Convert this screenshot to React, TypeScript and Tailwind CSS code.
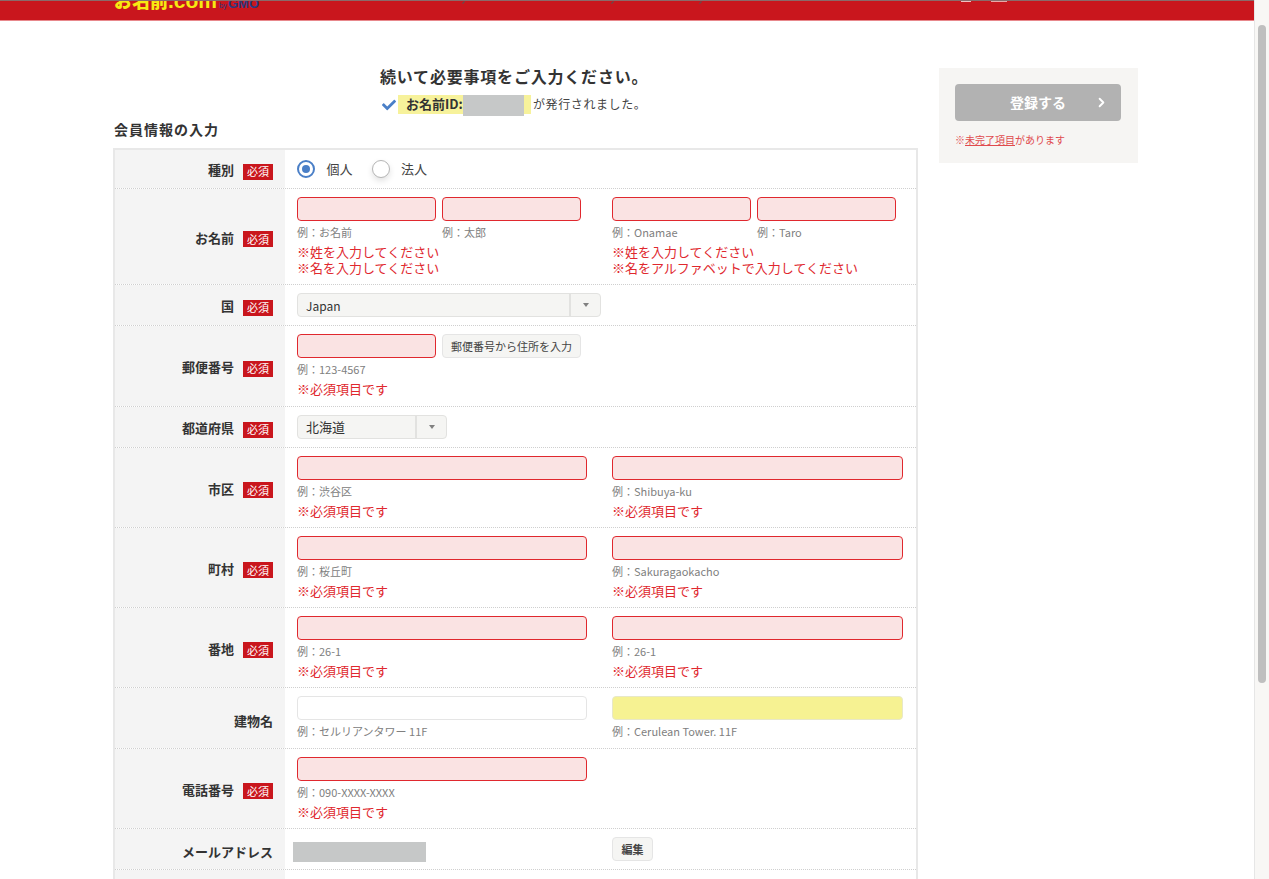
import React from 'react';
import { ChevronRight } from 'lucide-react';
import { FaCheck } from 'react-icons/fa';

const Badge = () => (
  <span className="mt-[3px] flex h-[16px] w-[30px] items-center justify-center bg-[#c9161d] text-[11px] font-normal leading-none text-white">必須</span>
);

const Hint = ({ children }: { children: React.ReactNode }) => (
  <p className="mt-[3px] h-[16px] text-[11px] leading-[16px] text-[#808080]">{children}</p>
);

const Err = ({ lines }: { lines: string[] }) => (
  <div className="mt-[4px] text-[13px] leading-[15.5px] text-[#e0282e]">
    {lines.map((l) => (
      <p key={l}>{l}</p>
    ))}
  </div>
);

const Input = ({ className }: { className: string }) => (
  <input type="text" className={`block h-[24px] rounded-[4px] border outline-none ${className}`} />
);

const errorInput = 'border-[#e0282e] bg-[#fae3e3]';

const Row = ({
  label,
  required = true,
  height,
  center = false,
  labelPad = 'pt-[2px]',
  children,
}: {
  label: string;
  required?: boolean;
  height: string;
  center?: boolean;
  labelPad?: string;
  children: React.ReactNode;
}) => (
  <div className={`grid grid-cols-[170px_1fr] border-b border-dotted border-[#cfcfcf] ${height}`}>
    <div className={`flex items-center justify-end gap-[9px] bg-[#f4f4f4] pr-[12px] text-[13px] font-bold text-[#333] ${labelPad}`}>
      <span>{label}</span>
      {required && <Badge />}
    </div>
    <div className={`px-[12px] ${center ? 'flex items-center' : 'pt-[8px]'}`}>{children}</div>
  </div>
);

const WideField = ({ hint, width = 'w-[290px]' }: { hint: string; width?: string }) => (
  <div className={width}>
    <Input className={`w-full ${errorInput}`} />
    <Hint>{hint}</Hint>
    <Err lines={['※必須項目です']} />
  </div>
);

const Select = ({ value, width, textClass }: { value: string; width: string; textClass: string }) => (
  <div className={`flex h-[24px] items-stretch rounded-[4px] border border-[#e2e2e0] bg-[#f5f5f3] text-[#333] ${width}`}>
    <div className={`flex flex-1 items-center border-r-2 border-[#e2e2e0] pl-[8px] ${textClass}`}>{value}</div>
    <div className="flex w-[29px] items-center justify-center">
      <span className="h-0 w-0 border-x-[3px] border-t-[4px] border-x-transparent border-t-[#808080]" />
    </div>
  </div>
);

const Radio = ({ checked, label }: { checked?: boolean; label: string }) => (
  <label className="flex items-center gap-[11.5px] text-[13px] text-[#444]">
    {checked ? (
      <span className="flex h-[18px] w-[18px] items-center justify-center rounded-full border-2 border-[#4a7fc7] bg-white">
        <span className="h-[8px] w-[8px] rounded-full bg-[#4a7fc7]" />
      </span>
    ) : (
      <span className="h-[18px] w-[18px] rounded-full border border-[#b5b5b5] bg-white shadow-[0_3px_6px_rgba(0,0,0,0.12)]" />
    )}
    {label}
  </label>
);

export default function App() {
  return (
    <div className="flex h-[879px] overflow-hidden bg-white font-['Noto_Sans_CJK_JP','Noto_Sans',sans-serif] text-[#333]">
      <div className="min-w-0 flex-1">
        {/* header, scrolled almost out of view */}
        <header className="h-[21px] overflow-hidden border-b border-t border-b-[#e8888c] border-t-[#8a6a6a] bg-[#c9161d]">
          <div className="ml-[114px] flex h-[19px] items-start">
            <div className="-mt-[14px] flex w-[145px] shrink-0 items-baseline whitespace-nowrap font-black leading-[26px] text-[#f6ea12]">
              <span className="text-[18px]">お名前</span>
              <span className="font-['Liberation_Sans',sans-serif] text-[21px] font-bold">.com</span>
              <span className="ml-[2px] text-[7px] font-normal text-[#2a3a80]">by</span>
              <span className="ml-[1px] font-['Liberation_Sans',sans-serif] text-[13px] font-bold text-[#2a3a80]">GMO</span>
            </div>
            {/* bottoms of the nav items that are scrolled away */}
            <span className="ml-[204px] h-[3px] w-[1px] rotate-45 bg-[#555]" />
            <span className="ml-[148px] h-[3px] w-[1px] rotate-45 bg-[#555]" />
            <span className="ml-[87px] h-[3px] w-[1px] rotate-45 bg-[#555]" />
            <span className="ml-[260px] h-[1px] w-[10px] bg-[#f0c0c0]" />
            <span className="ml-[20px] h-[1px] w-[16px] bg-[#e8a8a8]" />
          </div>
        </header>

        <div className="ml-[113px] flex w-[1025px] gap-[21px]">
          <main className="w-[805px]">
            <h1 className="ml-[267px] mt-[43px] text-[16px] font-bold leading-[24px] tracking-[0.05em] text-[#333]">
              続いて必要事項をご入力ください。
            </h1>
            <div className="ml-[269px] mt-[7px] flex h-[19px] items-start text-[12px] leading-[18px]">
              <FaCheck className="mt-[3px] h-[14px] w-[14px] text-[#4a7fc7]" />
              <div className="ml-[2px] flex h-[19px] w-[133px] bg-[#f7f29b] pl-[8px] text-[13px] font-bold">
                <span className="w-[57px] whitespace-nowrap">お名前ID:</span>
                <span className="h-[21px] w-[61px] bg-[#c6c8c8]" />
              </div>
              <span className="ml-[2px] tracking-[0.05em] text-[#444]">が発行されました。</span>
            </div>
            <h2 className="ml-[1px] mt-[5px] text-[14px] font-bold leading-[20px] tracking-[0.07em] text-[#333]">会員情報の入力</h2>

            <div className="mt-[9px] border-x-2 border-t-2 border-[#e8e8e8]">
              <Row label="種別" height="h-[39px]" center>
                <div className="flex gap-[19px]">
                  <Radio checked label="個人" />
                  <Radio label="法人" />
                </div>
              </Row>
              <Row label="お名前" height="h-[96px]">
                <div className="flex gap-[25px]">
                  <div className="w-[290px]">
                    <div className="flex gap-[6px]">
                      <div className="w-[139px]">
                        <Input className={`w-[139px] ${errorInput}`} />
                        <Hint>例：お名前</Hint>
                      </div>
                      <div className="w-[139px]">
                        <Input className={`w-[139px] ${errorInput}`} />
                        <Hint>例：太郎</Hint>
                      </div>
                    </div>
                    <Err lines={['※姓を入力してください', '※名を入力してください']} />
                  </div>
                  <div className="w-[291px]">
                    <div className="flex gap-[6px]">
                      <div className="w-[139px]">
                        <Input className={`w-[139px] ${errorInput}`} />
                        <Hint>例：Onamae</Hint>
                      </div>
                      <div className="w-[139px]">
                        <Input className={`w-[139px] ${errorInput}`} />
                        <Hint>例：Taro</Hint>
                      </div>
                    </div>
                    <Err lines={['※姓を入力してください', '※名をアルファベットで入力してください']} />
                  </div>
                </div>
              </Row>
              <Row label="国" height="h-[41px]" center>
                <Select value="Japan" width="w-[304px]" textClass="pt-[1px] text-[12px]" />
              </Row>
              <Row label="郵便番号" height="h-[81px]">
                <div className="flex gap-[6px]">
                  <Input className={`w-[139px] ${errorInput}`} />
                  <button className="h-[24px] w-[139px] rounded-[4px] border border-[#e5e5e5] bg-[#f5f5f3] text-[11px] text-[#444]">
                    郵便番号から住所を入力
                  </button>
                </div>
                <Hint>例：123-4567</Hint>
                <Err lines={['※必須項目です']} />
              </Row>
              <Row label="都道府県" height="h-[41px]" center>
                <Select value="北海道" width="w-[150px]" textClass="text-[13px]" />
              </Row>
              <Row label="市区" height="h-[80px]">
                <div className="flex gap-[25px]">
                  <WideField hint="例：渋谷区" />
                  <WideField hint="例：Shibuya-ku" width="w-[291px]" />
                </div>
              </Row>
              <Row label="町村" height="h-[80px]">
                <div className="flex gap-[25px]">
                  <WideField hint="例：桜丘町" />
                  <WideField hint="例：Sakuragaokacho" width="w-[291px]" />
                </div>
              </Row>
              <Row label="番地" height="h-[80px]">
                <div className="flex gap-[25px]">
                  <WideField hint="例：26-1" />
                  <WideField hint="例：26-1" width="w-[291px]" />
                </div>
              </Row>
              <Row label="建物名" required={false} height="h-[61px]" labelPad="pt-[5px]">
                <div className="flex gap-[25px]">
                  <div className="w-[290px]">
                    <Input className="w-[290px] border-[#e5e5e5] bg-white" />
                    <Hint>例：セルリアンタワー 11F</Hint>
                  </div>
                  <div className="w-[291px]">
                    <Input className="w-[291px] border-[#e8e8c8] bg-[#f6f292]" />
                    <Hint>例：Cerulean Tower. 11F</Hint>
                  </div>
                </div>
              </Row>
              <Row label="電話番号" height="h-[80px]">
                <WideField hint="例：090-XXXX-XXXX" />
              </Row>
              <Row label="メールアドレス" required={false} height="h-[41px]" labelPad="pt-[5px]">
                <div className="flex">
                  <span className="-ml-[4px] mt-[5px] h-[20px] w-[133px] bg-[#c6c8c8]" />
                  <button className="ml-[186px] h-[24px] w-[41px] rounded-[4px] border border-[#e5e5e5] bg-[#f5f5f3] text-[11px] font-bold text-[#444]">
                    編集
                  </button>
                </div>
              </Row>
              <div className="grid h-[40px] grid-cols-[170px_1fr]">
                <div className="bg-[#f4f4f4]" />
                <div />
              </div>
            </div>
          </main>

          <aside className="mt-[47px] h-[95px] w-[199px] bg-[#f6f5f3] p-[16px]">
            <button className="relative flex h-[37px] w-[166px] items-center justify-center rounded-[4px] bg-[#b2b2b2] text-[14px] font-bold text-white">
              登録する
              <ChevronRight className="absolute right-[12px] h-[15px] w-[15px]" strokeWidth={3} />
            </button>
            <p className="mt-[12px] text-[10px] leading-[14px] text-[#e04a4e]">
              ※<span className="underline">未完了項目</span>があります
            </p>
          </aside>
        </div>
      </div>

      {/* browser scrollbar */}
      <div className="w-[15px] shrink-0 border-l border-[#e6e6e6] bg-[#f8f7f5] pl-[3px] pt-[25px]">
        <div className="h-[658px] w-[8px] rounded-full bg-[#bfbfbf]" />
      </div>
    </div>
  );
}
